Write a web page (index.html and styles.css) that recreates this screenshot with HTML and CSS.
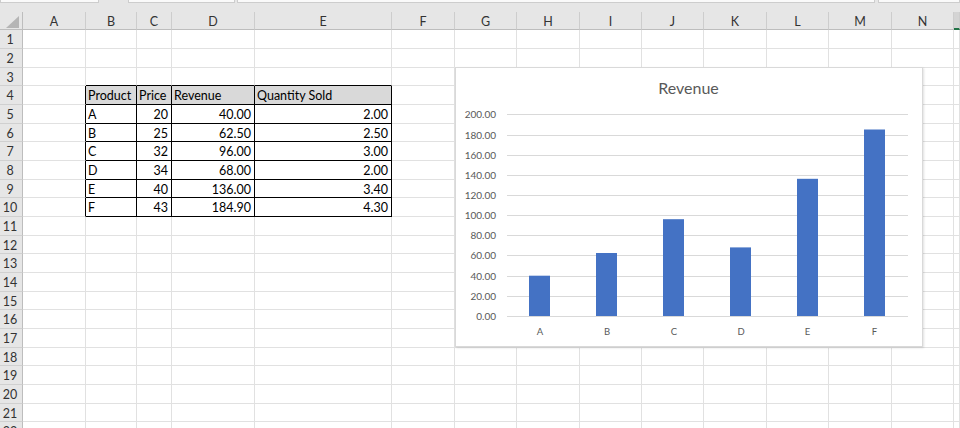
FILE: index.html
```html
<!DOCTYPE html>
<html>
<head>
<meta charset="utf-8">
<link rel="stylesheet" href="styles.css">
</head>
<body>
<div class="top">
  <span class="box b1"></span>
  <span class="box b2"></span>
  <span class="box b3"></span>
  <span class="box b4"></span>
</div>
<div class="wrap">
  <div class="sheet">
    <div class="corner"></div><div class="hd">A</div><div class="hd">B</div><div class="hd">C</div><div class="hd">D</div><div class="hd">E</div><div class="hd">F</div><div class="hd">G</div><div class="hd">H</div><div class="hd">I</div><div class="hd">J</div><div class="hd">K</div><div class="hd">L</div><div class="hd">M</div><div class="hd">N</div><div class="hd sel"></div>

    <div class="n">1</div><div></div><div></div><div></div><div></div><div></div><div></div><div></div><div></div><div></div><div></div><div></div><div></div><div></div><div></div><div></div>
    <div class="n">2</div><div></div><div></div><div></div><div></div><div></div><div></div><div></div><div></div><div></div><div></div><div></div><div></div><div></div><div></div><div></div>
    <div class="n">3</div><div></div><div class="bb"></div><div class="bb"></div><div class="bb"></div><div class="bb"></div><div></div><div></div><div></div><div></div><div></div><div></div><div></div><div></div><div></div><div></div>

    <div class="n">4</div><div class="br"></div><div class="th">Product</div><div class="th">Price</div><div class="th">Revenue</div><div class="th">Quantity Sold</div><div></div><div></div><div></div><div></div><div></div><div></div><div></div><div></div><div></div><div></div>
    <div class="n">5</div><div class="br"></div><div class="tb">A</div><div class="tb num">20</div><div class="tb num">40.00</div><div class="tb num">2.00</div><div></div><div></div><div></div><div></div><div></div><div></div><div></div><div></div><div></div><div></div>
    <div class="n">6</div><div class="br"></div><div class="tb">B</div><div class="tb num">25</div><div class="tb num">62.50</div><div class="tb num">2.50</div><div></div><div></div><div></div><div></div><div></div><div></div><div></div><div></div><div></div><div></div>
    <div class="n">7</div><div class="br"></div><div class="tb">C</div><div class="tb num">32</div><div class="tb num">96.00</div><div class="tb num">3.00</div><div></div><div></div><div></div><div></div><div></div><div></div><div></div><div></div><div></div><div></div>
    <div class="n">8</div><div class="br"></div><div class="tb">D</div><div class="tb num">34</div><div class="tb num">68.00</div><div class="tb num">2.00</div><div></div><div></div><div></div><div></div><div></div><div></div><div></div><div></div><div></div><div></div>
    <div class="n">9</div><div class="br"></div><div class="tb">E</div><div class="tb num">40</div><div class="tb num">136.00</div><div class="tb num">3.40</div><div></div><div></div><div></div><div></div><div></div><div></div><div></div><div></div><div></div><div></div>
    <div class="n">10</div><div class="br"></div><div class="tb">F</div><div class="tb num">43</div><div class="tb num">184.90</div><div class="tb num">4.30</div><div></div><div></div><div></div><div></div><div></div><div></div><div></div><div></div><div></div><div></div>

    <div class="n">11</div><div></div><div></div><div></div><div></div><div></div><div></div><div></div><div></div><div></div><div></div><div></div><div></div><div></div><div></div><div></div>
    <div class="n">12</div><div></div><div></div><div></div><div></div><div></div><div></div><div></div><div></div><div></div><div></div><div></div><div></div><div></div><div></div><div></div>
    <div class="n">13</div><div></div><div></div><div></div><div></div><div></div><div></div><div></div><div></div><div></div><div></div><div></div><div></div><div></div><div></div><div></div>
    <div class="n">14</div><div></div><div></div><div></div><div></div><div></div><div></div><div></div><div></div><div></div><div></div><div></div><div></div><div></div><div></div><div></div>
    <div class="n">15</div><div></div><div></div><div></div><div></div><div></div><div></div><div></div><div></div><div></div><div></div><div></div><div></div><div></div><div></div><div></div>
    <div class="n">16</div><div></div><div></div><div></div><div></div><div></div><div></div><div></div><div></div><div></div><div></div><div></div><div></div><div></div><div></div><div></div>
    <div class="n">17</div><div></div><div></div><div></div><div></div><div></div><div></div><div></div><div></div><div></div><div></div><div></div><div></div><div></div><div></div><div></div>
    <div class="n">18</div><div></div><div></div><div></div><div></div><div></div><div></div><div></div><div></div><div></div><div></div><div></div><div></div><div></div><div></div><div></div>
    <div class="n">19</div><div></div><div></div><div></div><div></div><div></div><div></div><div></div><div></div><div></div><div></div><div></div><div></div><div></div><div></div><div></div>
    <div class="n">20</div><div></div><div></div><div></div><div></div><div></div><div></div><div></div><div></div><div></div><div></div><div></div><div></div><div></div><div></div><div></div>
    <div class="n">21</div><div></div><div></div><div></div><div></div><div></div><div></div><div></div><div></div><div></div><div></div><div></div><div></div><div></div><div></div><div></div>
    <div class="n">22</div><div></div><div></div><div></div><div></div><div></div><div></div><div></div><div></div><div></div><div></div><div></div><div></div><div></div><div></div><div></div>
  </div>

  <div class="chart">
    <svg width="468" height="280" viewBox="0 0 468 280">
      <rect class="frame" x="0.5" y="0.5" width="467" height="279"/>
      <text class="ttl" x="233.5" y="26.5">Revenue</text>
      <g class="grid">
        <line x1="52" x2="453" y1="47.5" y2="47.5"/>
        <line x1="52" x2="453" y1="68.5" y2="68.5"/>
        <line x1="52" x2="453" y1="88.5" y2="88.5"/>
        <line x1="52" x2="453" y1="108.5" y2="108.5"/>
        <line x1="52" x2="453" y1="128.5" y2="128.5"/>
        <line x1="52" x2="453" y1="148.5" y2="148.5"/>
        <line x1="52" x2="453" y1="168.5" y2="168.5"/>
        <line x1="52" x2="453" y1="188.5" y2="188.5"/>
        <line x1="52" x2="453" y1="209.5" y2="209.5"/>
        <line x1="52" x2="453" y1="229.5" y2="229.5"/>
      </g>
      <g class="bars">
        <rect x="74" y="208.7" width="21" height="40.3"/>
        <rect x="141" y="186" width="21" height="63"/>
        <rect x="208" y="152.2" width="21" height="96.8"/>
        <rect x="275" y="180.4" width="21" height="68.6"/>
        <rect x="342" y="111.8" width="21" height="137.2"/>
        <rect x="409" y="62.5" width="21" height="186.5"/>
      </g>
      <line class="axis" x1="52" x2="453" y1="249.5" y2="249.5"/>
      <g class="ylab">
        <text x="41" y="51">200.00</text>
        <text x="41" y="72">180.00</text>
        <text x="41" y="92">160.00</text>
        <text x="41" y="112">140.00</text>
        <text x="41" y="132">120.00</text>
        <text x="41" y="152">100.00</text>
        <text x="41" y="172">80.00</text>
        <text x="41" y="192">60.00</text>
        <text x="41" y="213">40.00</text>
        <text x="41" y="233">20.00</text>
        <text x="41" y="253">0.00</text>
      </g>
      <g class="xlab">
        <text x="85" y="268">A</text>
        <text x="152" y="268">B</text>
        <text x="219" y="268">C</text>
        <text x="286" y="268">D</text>
        <text x="352.5" y="268">E</text>
        <text x="419.5" y="268">F</text>
      </g>
    </svg>
  </div>
</div>
</body>
</html>
```

FILE: styles.css
```css
html, body {
  margin: 0;
  background: #fff;
}

body {
  width: 960px;
  height: 428px;
  overflow: hidden;
  font-family: Lato, "Liberation Sans", sans-serif;
  font-size: 12.5px;
  color: #000;
}

.top {
  height: 12px;
  background: #e6e6e6;
  display: flex;
  align-items: flex-start;
}

.box {
  height: 2px;
  background: #fafafa;
  border: 1px solid #cdcdcd;
  border-top: 0;
}

.b1 { width: 97px; }
.b2 { width: 105px; margin-left: 29px; }
.b3 { flex: 1; margin-left: 2px; }
.b4 { width: 80px; margin-left: 3px; }

.wrap {
  position: relative;
}

.sheet {
  display: grid;
  grid-template-columns: 23px 63px 51px 35px 83px 137px 63px 62px 63px 62px 62px 63px 62px 63px 62px 1fr;
  grid-template-rows: 18px repeat(7, 19px 19px 18px) 19px;
}

.sheet > div {
  box-sizing: border-box;
  border-right: 1px solid #e1e1e1;
  border-bottom: 1px solid #e1e1e1;
  line-height: 20px;
  padding: 0 2px;
  white-space: nowrap;
  overflow: hidden;
}

.sheet > .hd {
  background: #e6e6e6;
  border-right-color: #cdcdcd;
  border-bottom-color: #bdbdbd;
  text-align: center;
  color: #333;
  line-height: 19px;
}

.sheet > .sel {
  background: #d4d4d4;
  border-bottom: 2px solid #217346;
}

.sheet > .corner {
  position: relative;
  background: #e6e6e6;
  border-right-color: #bdbdbd;
  border-bottom-color: #bdbdbd;
}

.corner::after {
  content: "";
  position: absolute;
  right: 3px;
  bottom: 1px;
  width: 13px;
  height: 12px;
  background: #b5b5b5;
  clip-path: polygon(100% 0, 100% 100%, 0 100%);
}

.sheet > .n {
  background: #e6e6e6;
  border-right-color: #bdbdbd;
  border-bottom-color: #d0d0d0;
  color: #333;
  text-align: center;
  padding: 0 2px 0 0;
}

.sheet > .bb {
  border-bottom-color: #000;
}

.sheet > .br {
  border-right-color: #000;
}

.sheet > .th {
  background: #d9d9d9;
  border-right-color: #000;
  border-bottom-color: #000;
}

.sheet > .tb {
  border-right-color: #000;
  border-bottom-color: #000;
}

.sheet > .num {
  text-align: right;
  padding-right: 3px;
}

.chart {
  position: absolute;
  left: 455px;
  top: 55px;
  width: 468px;
  height: 280px;
  background: #fff;
  box-shadow: 1px 1px 2px rgba(0, 0, 0, 0.12);
}

.chart svg {
  display: block;
}

.chart .frame {
  fill: #fff;
  stroke: #d9d9d9;
  stroke-width: 1;
}

.chart text {
  font-family: Lato, "Liberation Sans", sans-serif;
  fill: #595959;
}

.chart .ttl {
  font-size: 16px;
  text-anchor: middle;
}

.chart .grid line,
.chart .axis {
  stroke: #d9d9d9;
  stroke-width: 1;
}

.chart .bars rect {
  fill: #4472c4;
}

.chart .ylab text {
  font-size: 10px;
  text-anchor: end;
}

.chart .xlab text {
  font-size: 9.5px;
  text-anchor: middle;
}
```
